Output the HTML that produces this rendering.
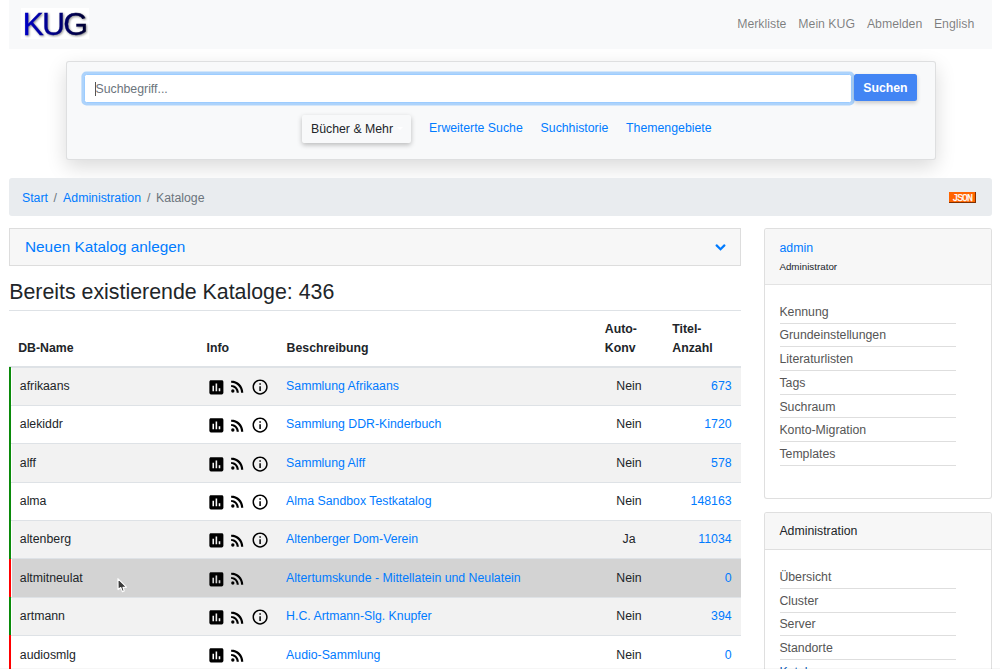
<!DOCTYPE html>
<html><head><meta charset="utf-8"><title>KUG Kataloge</title>
<style>
html,body{margin:0;padding:0;background:#fff;width:1000px;height:669px;overflow:hidden;position:relative;font-family:"Liberation Sans",sans-serif;}
.t{position:absolute;line-height:1;white-space:nowrap;}
.r{position:absolute;}
.logo{position:absolute;left:22.6px;top:6.6px;font-size:32px;line-height:1.1;font-family:"Liberation Sans",sans-serif;letter-spacing:-1.9px;-webkit-text-stroke:0.3px transparent;
 background:linear-gradient(90deg,#0000c8 0%,#00008a 45%,#000030 100%);-webkit-background-clip:text;background-clip:text;color:transparent;
 filter:drop-shadow(1px 1.5px 1px rgba(0,0,0,.45));}
.json{position:absolute;left:949px;top:192.3px;width:27.2px;height:10.5px;background:#ff6400;border-right:1px solid #803000;border-bottom:1px solid #803000;box-sizing:border-box;color:#fff;font-family:"Liberation Mono",monospace;font-weight:400;font-size:10px;line-height:10px;padding-top:1.5px;text-align:center;letter-spacing:-1.1px;text-indent:0px;-webkit-text-stroke:0.25px #fff;}
.ic{fill:#000;filter:drop-shadow(0 0 0.6px #fff);}
#w{position:absolute;left:0;top:0;width:1000px;height:669px;}
.caret{position:absolute;width:0;height:0;border-left:3.5px solid transparent;border-right:3.5px solid transparent;border-top:3.5px solid #fff;}
</style></head><body><div id="w">
<div class="r" style="left:9.00px;top:0.00px;width:983.00px;height:49.00px;background:#f8f9fa;"></div>
<div class="r" style="left:21.00px;top:7.70px;width:67.50px;height:31.00px;background:#fff;"></div>
<div class="logo">KUG</div>
<div class="t" style="left:737.20px;top:17.79px;font-size:12.3px;color:rgba(0,0,0,.5);font-weight:400;">Merkliste</div>
<div class="t" style="left:798.30px;top:17.79px;font-size:12.3px;color:rgba(0,0,0,.5);font-weight:400;">Mein KUG</div>
<div class="t" style="left:866.90px;top:17.79px;font-size:12.3px;color:rgba(0,0,0,.5);font-weight:400;">Abmelden</div>
<div class="t" style="left:933.90px;top:17.79px;font-size:12.3px;color:rgba(0,0,0,.5);font-weight:400;">English</div>
<div class="r" style="left:65.80px;top:61.30px;width:870.40px;height:98.50px;background:#f8f9fa;border:1px solid rgba(0,0,0,.1);border-radius:3px;box-shadow:0 7px 20px rgba(0,0,0,.15);box-sizing:border-box;"></div>
<div class="r" style="left:84.00px;top:73.50px;width:768.00px;height:29.50px;background:#fff;border:1px solid #9cccff;border-radius:2.5px;box-shadow:0 0 0 2.6px rgba(0,123,255,.3);box-sizing:border-box;"></div>
<div class="r" style="left:94.60px;top:81.80px;width:1.00px;height:14.20px;background:#555;"></div>
<div class="t" style="left:95.50px;top:82.79px;font-size:12.3px;color:#6c757d;font-weight:400;">Suchbegriff...</div>
<div class="r" style="left:854.40px;top:74.00px;width:62.30px;height:27.20px;background:#4285f4;border-radius:2.5px;box-shadow:0 2px 4px rgba(0,0,0,.2);"></div>
<div class="t" style="left:863.20px;top:81.79px;font-size:12.3px;color:#fff;font-weight:700;">Suchen</div>
<div class="r" style="left:302.00px;top:115.00px;width:109.00px;height:27.60px;background:#f8f9fa;border-radius:2px;box-shadow:0 2px 5px rgba(0,0,0,.25);"></div>
<div class="t" style="left:311.00px;top:123.49px;font-size:12.3px;color:#212529;font-weight:400;">Bücher &amp; Mehr</div>
<div class="caret" style="left:397px;top:127px;"></div>
<div class="t" style="left:429.10px;top:122.09px;font-size:12.3px;color:#007bff;font-weight:400;">Erweiterte Suche</div>
<div class="t" style="left:540.60px;top:122.09px;font-size:12.3px;color:#007bff;font-weight:400;">Suchhistorie</div>
<div class="t" style="left:626.10px;top:122.09px;font-size:12.3px;color:#007bff;font-weight:400;">Themengebiete</div>
<div class="r" style="left:9.00px;top:178.00px;width:983.00px;height:37.50px;background:#e9ecef;border-radius:3px;"></div>
<div class="t" style="left:22.00px;top:191.89px;font-size:12.3px;color:#007bff;font-weight:400;">Start</div>
<div class="t" style="left:53.50px;top:191.89px;font-size:12.3px;color:#6c757d;font-weight:400;">/</div>
<div class="t" style="left:63.10px;top:191.89px;font-size:12.3px;color:#007bff;font-weight:400;">Administration</div>
<div class="t" style="left:147.00px;top:191.89px;font-size:12.3px;color:#6c757d;font-weight:400;">/</div>
<div class="t" style="left:156.00px;top:191.89px;font-size:12.3px;color:#6c757d;font-weight:400;">Kataloge</div>
<div class="json">JSON</div>
<div class="r" style="left:9.00px;top:228.30px;width:732.00px;height:37.30px;background:#f7f7f7;border:1px solid rgba(0,0,0,.1);box-sizing:border-box;"></div>
<div class="t" style="left:25.00px;top:239.41px;font-size:15.35px;color:#007bff;font-weight:400;">Neuen Katalog anlegen</div>
<svg class="r" style="left:714px;top:243px" width="13" height="9" viewBox="0 0 13 9"><path d="M2.6 2.4 L6.5 6.2 L10.4 2.4" fill="none" stroke="#007bff" stroke-width="2.2" stroke-linecap="round" stroke-linejoin="miter"/></svg>
<div class="t" style="left:9.20px;top:282.23px;font-size:21.35px;color:#212529;font-weight:400;">Bereits existierende Kataloge: 436</div>
<div class="r" style="left:9.00px;top:310.10px;width:732.00px;height:1.00px;background:#dee2e6;"></div>
<div class="t" style="left:18.20px;top:341.59px;font-size:12.3px;color:#212529;font-weight:700;">DB-Name</div>
<div class="t" style="left:206.60px;top:341.59px;font-size:12.3px;color:#212529;font-weight:700;">Info</div>
<div class="t" style="left:286.60px;top:341.59px;font-size:12.3px;color:#212529;font-weight:700;">Beschreibung</div>
<div class="t" style="left:604.80px;top:323.39px;font-size:12.3px;color:#212529;font-weight:700;">Auto-</div>
<div class="t" style="left:604.80px;top:341.59px;font-size:12.3px;color:#212529;font-weight:700;">Konv</div>
<div class="t" style="left:672.30px;top:323.39px;font-size:12.3px;color:#212529;font-weight:700;">Titel-</div>
<div class="t" style="left:672.30px;top:341.59px;font-size:12.3px;color:#212529;font-weight:700;">Anzahl</div>
<div class="r" style="left:9.00px;top:365.50px;width:732.00px;height:2.00px;background:#dee2e6;"></div>
<div class="r" style="left:12.00px;top:367.50px;width:729.00px;height:37.35px;background:#f2f2f2;"></div>
<div class="r" style="left:9.00px;top:404.85px;width:732.00px;height:1.00px;background:#dee2e6;"></div>
<div class="r" style="left:8.70px;top:367.00px;width:2.40px;height:39.35px;background:#0a8a0a;"></div>
<div class="t" style="left:19.80px;top:380.09px;font-size:12.3px;color:#212529;font-weight:400;">afrikaans</div>
<svg class="r ic" style="left:206.9px;top:377.90px" width="18.75" height="18.75" viewBox="0 0 24 24"><path d="M19 3H5c-1.1 0-2 .9-2 2v14c0 1.1.9 2 2 2h14c1.1 0 2-.9 2-2V5c0-1.1-.9-2-2-2zM9 17H7v-7h2v7zm4 0h-2V7h2v10zm4 0h-2v-4h2v4z"/></svg><svg class="r ic" style="left:227.8px;top:377.40px" width="18.75" height="18.75" viewBox="0 0 24 24"><circle cx="6.18" cy="17.82" r="2.18"/><path d="M4 4.44v2.83c7.03 0 12.73 5.7 12.73 12.73h2.83c0-8.59-6.97-15.56-15.56-15.56zm0 5.66v2.83c3.9 0 7.07 3.17 7.07 7.07h2.83c0-5.47-4.43-9.9-9.9-9.9z"/></svg><svg class="r ic" style="left:250.9px;top:377.90px" width="18.2" height="18.2" viewBox="0 0 24 24"><path d="M11 17h2v-6h-2v6zm1-15C6.48 2 2 6.48 2 12s4.48 10 10 10 10-4.48 10-10S17.52 2 12 2zm0 18c-4.41 0-8-3.59-8-8s3.59-8 8-8 8 3.59 8 8-3.59 8-8 8zM11 9h2V7h-2v2z"/></svg><div class="t" style="left:286.10px;top:380.09px;font-size:12.3px;color:#007bff;font-weight:400;">Sammlung Afrikaans</div>
<div class="t" style="left:580px;width:98px;text-align:center;top:380.09px;font-size:12.3px;color:#212529">Nein</div>
<div class="t" style="right:268.40px;top:380.09px;font-size:12.3px;color:#007bff;font-weight:400;">673</div>
<div class="r" style="left:12.00px;top:405.85px;width:729.00px;height:37.35px;background:#fff;"></div>
<div class="r" style="left:9.00px;top:443.20px;width:732.00px;height:1.00px;background:#dee2e6;"></div>
<div class="r" style="left:8.70px;top:405.35px;width:2.40px;height:39.35px;background:#0a8a0a;"></div>
<div class="t" style="left:19.80px;top:418.44px;font-size:12.3px;color:#212529;font-weight:400;">alekiddr</div>
<svg class="r ic" style="left:206.9px;top:416.25px" width="18.75" height="18.75" viewBox="0 0 24 24"><path d="M19 3H5c-1.1 0-2 .9-2 2v14c0 1.1.9 2 2 2h14c1.1 0 2-.9 2-2V5c0-1.1-.9-2-2-2zM9 17H7v-7h2v7zm4 0h-2V7h2v10zm4 0h-2v-4h2v4z"/></svg><svg class="r ic" style="left:227.8px;top:415.75px" width="18.75" height="18.75" viewBox="0 0 24 24"><circle cx="6.18" cy="17.82" r="2.18"/><path d="M4 4.44v2.83c7.03 0 12.73 5.7 12.73 12.73h2.83c0-8.59-6.97-15.56-15.56-15.56zm0 5.66v2.83c3.9 0 7.07 3.17 7.07 7.07h2.83c0-5.47-4.43-9.9-9.9-9.9z"/></svg><svg class="r ic" style="left:250.9px;top:416.25px" width="18.2" height="18.2" viewBox="0 0 24 24"><path d="M11 17h2v-6h-2v6zm1-15C6.48 2 2 6.48 2 12s4.48 10 10 10 10-4.48 10-10S17.52 2 12 2zm0 18c-4.41 0-8-3.59-8-8s3.59-8 8-8 8 3.59 8 8-3.59 8-8 8zM11 9h2V7h-2v2z"/></svg><div class="t" style="left:286.10px;top:418.44px;font-size:12.3px;color:#007bff;font-weight:400;">Sammlung DDR-Kinderbuch</div>
<div class="t" style="left:580px;width:98px;text-align:center;top:418.44px;font-size:12.3px;color:#212529">Nein</div>
<div class="t" style="right:268.40px;top:418.44px;font-size:12.3px;color:#007bff;font-weight:400;">1720</div>
<div class="r" style="left:12.00px;top:444.20px;width:729.00px;height:37.35px;background:#f2f2f2;"></div>
<div class="r" style="left:9.00px;top:481.55px;width:732.00px;height:1.00px;background:#dee2e6;"></div>
<div class="r" style="left:8.70px;top:443.70px;width:2.40px;height:39.35px;background:#0a8a0a;"></div>
<div class="t" style="left:19.80px;top:456.79px;font-size:12.3px;color:#212529;font-weight:400;">alff</div>
<svg class="r ic" style="left:206.9px;top:454.60px" width="18.75" height="18.75" viewBox="0 0 24 24"><path d="M19 3H5c-1.1 0-2 .9-2 2v14c0 1.1.9 2 2 2h14c1.1 0 2-.9 2-2V5c0-1.1-.9-2-2-2zM9 17H7v-7h2v7zm4 0h-2V7h2v10zm4 0h-2v-4h2v4z"/></svg><svg class="r ic" style="left:227.8px;top:454.10px" width="18.75" height="18.75" viewBox="0 0 24 24"><circle cx="6.18" cy="17.82" r="2.18"/><path d="M4 4.44v2.83c7.03 0 12.73 5.7 12.73 12.73h2.83c0-8.59-6.97-15.56-15.56-15.56zm0 5.66v2.83c3.9 0 7.07 3.17 7.07 7.07h2.83c0-5.47-4.43-9.9-9.9-9.9z"/></svg><svg class="r ic" style="left:250.9px;top:454.60px" width="18.2" height="18.2" viewBox="0 0 24 24"><path d="M11 17h2v-6h-2v6zm1-15C6.48 2 2 6.48 2 12s4.48 10 10 10 10-4.48 10-10S17.52 2 12 2zm0 18c-4.41 0-8-3.59-8-8s3.59-8 8-8 8 3.59 8 8-3.59 8-8 8zM11 9h2V7h-2v2z"/></svg><div class="t" style="left:286.10px;top:456.79px;font-size:12.3px;color:#007bff;font-weight:400;">Sammlung Alff</div>
<div class="t" style="left:580px;width:98px;text-align:center;top:456.79px;font-size:12.3px;color:#212529">Nein</div>
<div class="t" style="right:268.40px;top:456.79px;font-size:12.3px;color:#007bff;font-weight:400;">578</div>
<div class="r" style="left:12.00px;top:482.55px;width:729.00px;height:37.35px;background:#fff;"></div>
<div class="r" style="left:9.00px;top:519.90px;width:732.00px;height:1.00px;background:#dee2e6;"></div>
<div class="r" style="left:8.70px;top:482.05px;width:2.40px;height:39.35px;background:#0a8a0a;"></div>
<div class="t" style="left:19.80px;top:495.14px;font-size:12.3px;color:#212529;font-weight:400;">alma</div>
<svg class="r ic" style="left:206.9px;top:492.95px" width="18.75" height="18.75" viewBox="0 0 24 24"><path d="M19 3H5c-1.1 0-2 .9-2 2v14c0 1.1.9 2 2 2h14c1.1 0 2-.9 2-2V5c0-1.1-.9-2-2-2zM9 17H7v-7h2v7zm4 0h-2V7h2v10zm4 0h-2v-4h2v4z"/></svg><svg class="r ic" style="left:227.8px;top:492.45px" width="18.75" height="18.75" viewBox="0 0 24 24"><circle cx="6.18" cy="17.82" r="2.18"/><path d="M4 4.44v2.83c7.03 0 12.73 5.7 12.73 12.73h2.83c0-8.59-6.97-15.56-15.56-15.56zm0 5.66v2.83c3.9 0 7.07 3.17 7.07 7.07h2.83c0-5.47-4.43-9.9-9.9-9.9z"/></svg><svg class="r ic" style="left:250.9px;top:492.95px" width="18.2" height="18.2" viewBox="0 0 24 24"><path d="M11 17h2v-6h-2v6zm1-15C6.48 2 2 6.48 2 12s4.48 10 10 10 10-4.48 10-10S17.52 2 12 2zm0 18c-4.41 0-8-3.59-8-8s3.59-8 8-8 8 3.59 8 8-3.59 8-8 8zM11 9h2V7h-2v2z"/></svg><div class="t" style="left:286.10px;top:495.14px;font-size:12.3px;color:#007bff;font-weight:400;">Alma Sandbox Testkatalog</div>
<div class="t" style="left:580px;width:98px;text-align:center;top:495.14px;font-size:12.3px;color:#212529">Nein</div>
<div class="t" style="right:268.40px;top:495.14px;font-size:12.3px;color:#007bff;font-weight:400;">148163</div>
<div class="r" style="left:12.00px;top:520.90px;width:729.00px;height:37.35px;background:#f2f2f2;"></div>
<div class="r" style="left:9.00px;top:558.25px;width:732.00px;height:1.00px;background:#dee2e6;"></div>
<div class="r" style="left:8.70px;top:520.40px;width:2.40px;height:39.35px;background:#0a8a0a;"></div>
<div class="t" style="left:19.80px;top:533.49px;font-size:12.3px;color:#212529;font-weight:400;">altenberg</div>
<svg class="r ic" style="left:206.9px;top:531.30px" width="18.75" height="18.75" viewBox="0 0 24 24"><path d="M19 3H5c-1.1 0-2 .9-2 2v14c0 1.1.9 2 2 2h14c1.1 0 2-.9 2-2V5c0-1.1-.9-2-2-2zM9 17H7v-7h2v7zm4 0h-2V7h2v10zm4 0h-2v-4h2v4z"/></svg><svg class="r ic" style="left:227.8px;top:530.80px" width="18.75" height="18.75" viewBox="0 0 24 24"><circle cx="6.18" cy="17.82" r="2.18"/><path d="M4 4.44v2.83c7.03 0 12.73 5.7 12.73 12.73h2.83c0-8.59-6.97-15.56-15.56-15.56zm0 5.66v2.83c3.9 0 7.07 3.17 7.07 7.07h2.83c0-5.47-4.43-9.9-9.9-9.9z"/></svg><svg class="r ic" style="left:250.9px;top:531.30px" width="18.2" height="18.2" viewBox="0 0 24 24"><path d="M11 17h2v-6h-2v6zm1-15C6.48 2 2 6.48 2 12s4.48 10 10 10 10-4.48 10-10S17.52 2 12 2zm0 18c-4.41 0-8-3.59-8-8s3.59-8 8-8 8 3.59 8 8-3.59 8-8 8zM11 9h2V7h-2v2z"/></svg><div class="t" style="left:286.10px;top:533.49px;font-size:12.3px;color:#007bff;font-weight:400;">Altenberger Dom-Verein</div>
<div class="t" style="left:580px;width:98px;text-align:center;top:533.49px;font-size:12.3px;color:#212529">Ja</div>
<div class="t" style="right:268.40px;top:533.49px;font-size:12.3px;color:#007bff;font-weight:400;">11034</div>
<div class="r" style="left:12.00px;top:559.25px;width:729.00px;height:37.35px;background:#d3d3d3;"></div>
<div class="r" style="left:9.00px;top:596.60px;width:732.00px;height:1.00px;background:#dee2e6;"></div>
<div class="r" style="left:8.70px;top:558.75px;width:2.40px;height:39.35px;background:#ff0000;"></div>
<div class="t" style="left:19.80px;top:571.84px;font-size:12.3px;color:#212529;font-weight:400;">altmitneulat</div>
<svg class="r ic" style="left:206.9px;top:569.65px" width="18.75" height="18.75" viewBox="0 0 24 24"><path d="M19 3H5c-1.1 0-2 .9-2 2v14c0 1.1.9 2 2 2h14c1.1 0 2-.9 2-2V5c0-1.1-.9-2-2-2zM9 17H7v-7h2v7zm4 0h-2V7h2v10zm4 0h-2v-4h2v4z"/></svg><svg class="r ic" style="left:227.8px;top:569.15px" width="18.75" height="18.75" viewBox="0 0 24 24"><circle cx="6.18" cy="17.82" r="2.18"/><path d="M4 4.44v2.83c7.03 0 12.73 5.7 12.73 12.73h2.83c0-8.59-6.97-15.56-15.56-15.56zm0 5.66v2.83c3.9 0 7.07 3.17 7.07 7.07h2.83c0-5.47-4.43-9.9-9.9-9.9z"/></svg><div class="t" style="left:286.10px;top:571.84px;font-size:12.3px;color:#007bff;font-weight:400;">Altertumskunde - Mittellatein und Neulatein</div>
<div class="t" style="left:580px;width:98px;text-align:center;top:571.84px;font-size:12.3px;color:#212529">Nein</div>
<div class="t" style="right:268.40px;top:571.84px;font-size:12.3px;color:#007bff;font-weight:400;">0</div>
<div class="r" style="left:12.00px;top:597.60px;width:729.00px;height:37.35px;background:#f2f2f2;"></div>
<div class="r" style="left:9.00px;top:634.95px;width:732.00px;height:1.00px;background:#dee2e6;"></div>
<div class="r" style="left:8.70px;top:597.10px;width:2.40px;height:39.35px;background:#0a8a0a;"></div>
<div class="t" style="left:19.80px;top:610.19px;font-size:12.3px;color:#212529;font-weight:400;">artmann</div>
<svg class="r ic" style="left:206.9px;top:608.00px" width="18.75" height="18.75" viewBox="0 0 24 24"><path d="M19 3H5c-1.1 0-2 .9-2 2v14c0 1.1.9 2 2 2h14c1.1 0 2-.9 2-2V5c0-1.1-.9-2-2-2zM9 17H7v-7h2v7zm4 0h-2V7h2v10zm4 0h-2v-4h2v4z"/></svg><svg class="r ic" style="left:227.8px;top:607.50px" width="18.75" height="18.75" viewBox="0 0 24 24"><circle cx="6.18" cy="17.82" r="2.18"/><path d="M4 4.44v2.83c7.03 0 12.73 5.7 12.73 12.73h2.83c0-8.59-6.97-15.56-15.56-15.56zm0 5.66v2.83c3.9 0 7.07 3.17 7.07 7.07h2.83c0-5.47-4.43-9.9-9.9-9.9z"/></svg><svg class="r ic" style="left:250.9px;top:608.00px" width="18.2" height="18.2" viewBox="0 0 24 24"><path d="M11 17h2v-6h-2v6zm1-15C6.48 2 2 6.48 2 12s4.48 10 10 10 10-4.48 10-10S17.52 2 12 2zm0 18c-4.41 0-8-3.59-8-8s3.59-8 8-8 8 3.59 8 8-3.59 8-8 8zM11 9h2V7h-2v2z"/></svg><div class="t" style="left:286.10px;top:610.19px;font-size:12.3px;color:#007bff;font-weight:400;">H.C. Artmann-Slg. Knupfer</div>
<div class="t" style="left:580px;width:98px;text-align:center;top:610.19px;font-size:12.3px;color:#212529">Nein</div>
<div class="t" style="right:268.40px;top:610.19px;font-size:12.3px;color:#007bff;font-weight:400;">394</div>
<div class="r" style="left:12.00px;top:635.95px;width:729.00px;height:37.35px;background:#fff;"></div>
<div class="r" style="left:9.00px;top:673.30px;width:732.00px;height:1.00px;background:#dee2e6;"></div>
<div class="r" style="left:8.70px;top:635.45px;width:2.40px;height:39.35px;background:#ff0000;"></div>
<div class="t" style="left:19.80px;top:648.54px;font-size:12.3px;color:#212529;font-weight:400;">audiosmlg</div>
<svg class="r ic" style="left:206.9px;top:646.35px" width="18.75" height="18.75" viewBox="0 0 24 24"><path d="M19 3H5c-1.1 0-2 .9-2 2v14c0 1.1.9 2 2 2h14c1.1 0 2-.9 2-2V5c0-1.1-.9-2-2-2zM9 17H7v-7h2v7zm4 0h-2V7h2v10zm4 0h-2v-4h2v4z"/></svg><svg class="r ic" style="left:227.8px;top:645.85px" width="18.75" height="18.75" viewBox="0 0 24 24"><circle cx="6.18" cy="17.82" r="2.18"/><path d="M4 4.44v2.83c7.03 0 12.73 5.7 12.73 12.73h2.83c0-8.59-6.97-15.56-15.56-15.56zm0 5.66v2.83c3.9 0 7.07 3.17 7.07 7.07h2.83c0-5.47-4.43-9.9-9.9-9.9z"/></svg><div class="t" style="left:286.10px;top:648.54px;font-size:12.3px;color:#007bff;font-weight:400;">Audio-Sammlung</div>
<div class="t" style="left:580px;width:98px;text-align:center;top:648.54px;font-size:12.3px;color:#212529">Nein</div>
<div class="t" style="right:268.40px;top:648.54px;font-size:12.3px;color:#007bff;font-weight:400;">0</div>
<div class="r" style="left:764.40px;top:228.40px;width:227.60px;height:270.90px;background:#fff;border:1px solid rgba(0,0,0,.125);border-radius:3px;box-sizing:border-box;"></div>
<div class="r" style="left:765.40px;top:229.40px;width:225.60px;height:54.60px;background:#f7f7f7;border-radius:2px 2px 0 0;"></div>
<div class="r" style="left:765.40px;top:283.80px;width:225.60px;height:1.20px;background:rgba(0,0,0,.11);"></div>
<div class="t" style="left:779.50px;top:242.19px;font-size:12.3px;color:#007bff;font-weight:400;">admin</div>
<div class="t" style="left:779.40px;top:261.50px;font-size:9.8px;color:#212529;font-weight:400;">Administrator</div>
<div class="t" style="left:779.40px;top:305.79px;font-size:12.3px;color:#555;font-weight:400;">Kennung</div>
<div class="r" style="left:780.00px;top:322.70px;width:176.30px;height:1.00px;background:#dedede;"></div>
<div class="t" style="left:779.40px;top:329.47px;font-size:12.3px;color:#555;font-weight:400;">Grundeinstellungen</div>
<div class="r" style="left:780.00px;top:346.38px;width:176.30px;height:1.00px;background:#dedede;"></div>
<div class="t" style="left:779.40px;top:353.15px;font-size:12.3px;color:#555;font-weight:400;">Literaturlisten</div>
<div class="r" style="left:780.00px;top:370.06px;width:176.30px;height:1.00px;background:#dedede;"></div>
<div class="t" style="left:779.40px;top:376.83px;font-size:12.3px;color:#555;font-weight:400;">Tags</div>
<div class="r" style="left:780.00px;top:393.74px;width:176.30px;height:1.00px;background:#dedede;"></div>
<div class="t" style="left:779.40px;top:400.51px;font-size:12.3px;color:#555;font-weight:400;">Suchraum</div>
<div class="r" style="left:780.00px;top:417.42px;width:176.30px;height:1.00px;background:#dedede;"></div>
<div class="t" style="left:779.40px;top:424.19px;font-size:12.3px;color:#555;font-weight:400;">Konto-Migration</div>
<div class="r" style="left:780.00px;top:441.10px;width:176.30px;height:1.00px;background:#dedede;"></div>
<div class="t" style="left:779.40px;top:447.87px;font-size:12.3px;color:#555;font-weight:400;">Templates</div>
<div class="r" style="left:780.00px;top:464.78px;width:176.30px;height:1.00px;background:#dedede;"></div>
<div class="r" style="left:764.40px;top:512.30px;width:227.60px;height:187.70px;background:#fff;border:1px solid rgba(0,0,0,.125);border-radius:3px;box-sizing:border-box;"></div>
<div class="r" style="left:765.40px;top:513.30px;width:225.60px;height:36.00px;background:#f7f7f7;border-radius:2px 2px 0 0;"></div>
<div class="r" style="left:765.40px;top:548.80px;width:225.60px;height:1.20px;background:rgba(0,0,0,.125);"></div>
<div class="t" style="left:779.40px;top:525.19px;font-size:12.3px;color:#212529;font-weight:400;">Administration</div>
<div class="t" style="left:779.40px;top:570.99px;font-size:12.3px;color:#555;font-weight:400;">Übersicht</div>
<div class="r" style="left:780.00px;top:587.90px;width:176.30px;height:1.00px;background:#dedede;"></div>
<div class="t" style="left:779.40px;top:594.59px;font-size:12.3px;color:#555;font-weight:400;">Cluster</div>
<div class="r" style="left:780.00px;top:611.50px;width:176.30px;height:1.00px;background:#dedede;"></div>
<div class="t" style="left:779.40px;top:618.19px;font-size:12.3px;color:#555;font-weight:400;">Server</div>
<div class="r" style="left:780.00px;top:635.10px;width:176.30px;height:1.00px;background:#dedede;"></div>
<div class="t" style="left:779.40px;top:641.79px;font-size:12.3px;color:#555;font-weight:400;">Standorte</div>
<div class="r" style="left:780.00px;top:658.70px;width:176.30px;height:1.00px;background:#dedede;"></div>
<div class="t" style="left:779.40px;top:666.29px;font-size:12.3px;color:#0056b3;font-weight:400;">Kataloge</div>
<div class="r" style="left:780.00px;top:682.30px;width:176.30px;height:1.00px;background:#dedede;"></div>
<div class="r" style="left:0;top:668px;width:1000px;height:1px;background:rgba(0,0,0,.035)"></div>
<svg class="r" style="left:116px;top:577px" width="13" height="17" viewBox="0 0 13 17"><path d="M1.9 1.6 L2.1 12.6 L4.8 10.6 L6.4 14.6 L8.2 13.9 L7 10.3 L10.5 10.1 Z" fill="#3a3a3a" stroke="#fff" stroke-width="1.2" stroke-linejoin="round"/></svg>

</div></body></html>
